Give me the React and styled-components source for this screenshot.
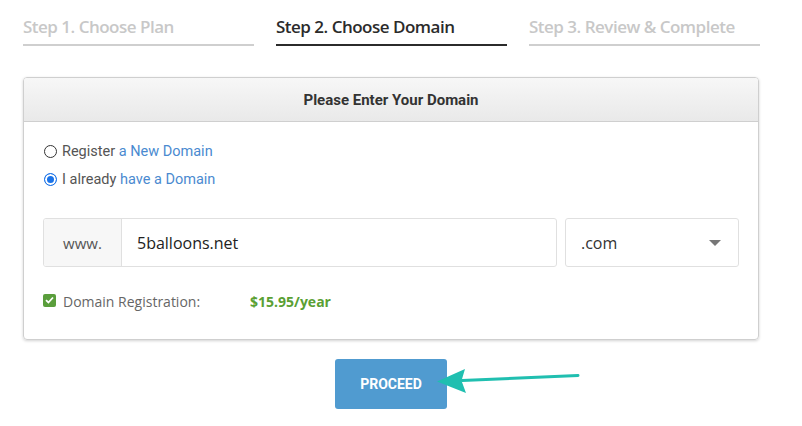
import React from 'react';
import styled, { createGlobalStyle } from 'styled-components';

const GlobalStyle = createGlobalStyle`
  html, body { margin: 0; padding: 0; background: #fff; }
  body { font-family: "Open Sans", "Liberation Sans", sans-serif; }
`;

const Page = styled.div`
  position: relative;
  width: 802px;
  height: 426px;
  padding: 15px 23px 0 23px;
  box-sizing: border-box;
`;

const Steps = styled.div`
  display: grid;
  grid-template-columns: repeat(3, 231px);
  column-gap: 22px;
`;

const Step = styled.div`
  font-family: "Open Sans", sans-serif;
  font-weight: 600;
  font-size: 17px;
  letter-spacing: -0.5px;
  color: ${p => (p.active ? '#2b2b2b' : '#c8c8c8')};
  padding-bottom: 5px;
  border-bottom: 2px solid ${p => (p.active ? '#2b2b2b' : '#cfcfcf')};
  height: 24px;
  line-height: 24px;
`;

const Card = styled.div`
  margin-top: 31px;
  width: 736px;
  border: 1px solid #cfcfcf;
  border-radius: 4px;
  box-shadow: 0 1px 3px rgba(0, 0, 0, 0.18);
  box-sizing: border-box;
  overflow: hidden;
`;

const CardHeader = styled.div`
  height: 43px;
  display: flex;
  align-items: center;
  justify-content: center;
  background: linear-gradient(#f7f7f7, #e9e9e9);
  border-bottom: 1px solid #cfcfcf;
  font-family: Roboto, sans-serif;
  font-weight: 700;
  font-size: 15px;
  color: #333;
`;

const CardBody = styled.div`
  padding: 15px 19px 28px 19px;
`;

const RadioRow = styled.label`
  display: flex;
  align-items: center;
  gap: 5px;
  height: 28px;
  font-family: Roboto, sans-serif;
  font-size: 14.5px;
  color: #555;
`;

const Radio = styled.span`
  width: 13px;
  height: 13px;
  border-radius: 50%;
  box-sizing: border-box;
  border: ${p => (p.checked ? '1px solid #1a73e8' : '1px solid #333')};
  background: ${p => (p.checked ? '#1a73e8' : '#fff')};
  box-shadow: ${p => (p.checked ? 'inset 0 0 0 2px #fff' : 'none')};
  margin-left: 1px;
`;

const Link = styled.span`
  color: #4a8ad0;
`;

const InputRow = styled.div`
  display: flex;
  gap: 8px;
  margin-top: 25px;
`;

const InputGroup = styled.div`
  display: flex;
  width: 514px;
  height: 49px;
  border: 1px solid #e0e0e0;
  border-radius: 3px;
  box-sizing: border-box;
  overflow: hidden;
`;

const Addon = styled.div`
  width: 77px;
  display: flex;
  align-items: center;
  justify-content: center;
  background: #f7f7f7;
  border-right: 1px solid #e0e0e0;
  font-size: 15px;
  color: #555;
`;

const Field = styled.div`
  flex: 1;
  display: flex;
  align-items: center;
  padding-left: 15px;
  font-size: 16px;
  color: #222;
`;

const Select = styled.div`
  width: 174px;
  height: 49px;
  border: 1px solid #e0e0e0;
  border-radius: 3px;
  box-sizing: border-box;
  display: flex;
  align-items: center;
  justify-content: space-between;
  padding: 0 17px 0 15px;
  font-size: 16px;
  color: #333;
`;

const Caret = styled.span`
  width: 0;
  height: 0;
  border-left: 6px solid transparent;
  border-right: 6px solid transparent;
  border-top: 6px solid #777;
`;

const PriceRow = styled.div`
  display: flex;
  align-items: center;
  margin-top: 25px;
  font-size: 14px;
  color: #666;
`;

const Check = styled.span`
  width: 13px;
  height: 13px;
  border-radius: 2px;
  background: #5a9e3c;
  display: flex;
  align-items: center;
  justify-content: center;
  margin-right: 7px;
  margin-top: -3px;
`;

const Price = styled.span`
  margin-left: 50px;
  font-weight: 700;
  color: #5aa033;
`;

const ButtonRow = styled.div`
  display: flex;
  margin-top: 19px;
  padding-left: 312px;
`;

const Button = styled.button`
  width: 112px;
  height: 50px;
  border: none;
  border-radius: 3px;
  background: #509bd0;
  color: #fff;
  font-family: Roboto, sans-serif;
  font-weight: 700;
  font-size: 14px;
`;

const Arrow = styled.svg`
  position: absolute;
  left: 0;
  top: 0;
  pointer-events: none;
`;

export default function App() {
  return (
    <Page>
      <GlobalStyle />
      <Steps>
        <Step>Step 1. Choose Plan</Step>
        <Step active>Step 2. Choose Domain</Step>
        <Step>Step 3. Review &amp; Complete</Step>
      </Steps>
      <Card>
        <CardHeader>Please Enter Your Domain</CardHeader>
        <CardBody>
          <RadioRow>
            <Radio />
            <span>Register <Link>a New Domain</Link></span>
          </RadioRow>
          <RadioRow>
            <Radio checked />
            <span>I already <Link>have a Domain</Link></span>
          </RadioRow>
          <InputRow>
            <InputGroup>
              <Addon>www.</Addon>
              <Field>5balloons.net</Field>
            </InputGroup>
            <Select>
              .com
              <Caret />
            </Select>
          </InputRow>
          <PriceRow>
            <Check>
              <svg width="9" height="8" viewBox="0 0 9 8">
                <path d="M1 4.2 L3.4 6.5 L8 1.5" stroke="#fff" strokeWidth="1.8" fill="none" />
              </svg>
            </Check>
            Domain Registration:
            <Price>$15.95/year</Price>
          </PriceRow>
        </CardBody>
      </Card>
      <ButtonRow>
        <Button>PROCEED</Button>
      </ButtonRow>
      <Arrow width="802" height="426" viewBox="0 0 802 426">
        <path d="M578 375.5 L462 380.5" stroke="#20bfb0" strokeWidth="3" strokeLinecap="round" />
        <path d="M437 381.5 L465 369 L461.5 380.8 L466 393 Z" fill="#20bfb0" />
      </Arrow>
    </Page>
  );
}
